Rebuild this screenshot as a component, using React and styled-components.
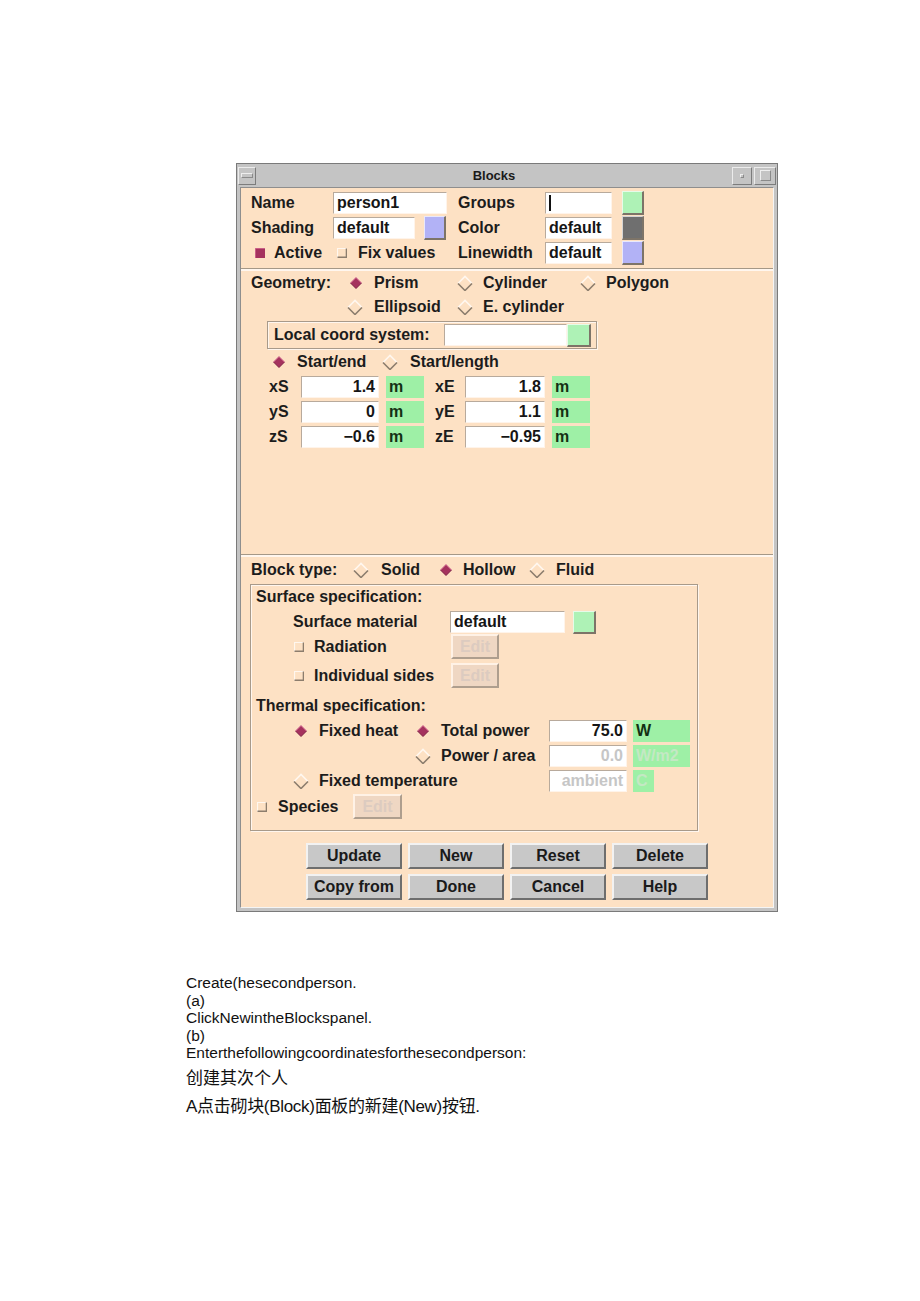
import React from "react";
import styled, { createGlobalStyle } from "styled-components";

const GlobalStyle = createGlobalStyle`
    body {
        margin: 0;
        background: #ffffff;
        font-family: "Liberation Sans", Arial, sans-serif;
    }
`;

const Page = styled.div`
    width: 920px;
    min-height: 1301px;
    padding-top: 163px;
    box-sizing: border-box;
`;

const Window = styled.div`
    margin-left: 236px;
    width: 542px;
    height: 749px;
    box-sizing: border-box;
    border: 1px solid #7a7a7a;
    background: #c4c4c4;
    display: flex;
    flex-direction: column;
`;

const TitleBar = styled.div`
    height: 23px;
    display: flex;
    align-items: center;
    padding: 0 1px;
    gap: 2px;
`;

const TitleButton = styled.div`
    width: ${(p) => p.$w || 18}px;
    height: 18px;
    box-sizing: border-box;
    border: 1px solid;
    border-color: #ececec #7c7c7c #7c7c7c #ececec;
    display: flex;
    align-items: center;
    justify-content: center;

    & i {
        display: block;
        width: ${(p) => p.$mark[0]}px;
        height: ${(p) => p.$mark[1]}px;
        border: 1px solid #8a8a8a;
        border-top-color: #eee;
        border-left-color: #eee;
    }
`;

const Title = styled.div`
    flex: 1;
    text-align: center;
    font-size: 13px;
    font-weight: bold;
    color: #1a1a1a;
`;

const Body = styled.div`
    flex: 1;
    margin: 0 3px 3px 3px;
    border: 1px solid;
    border-color: #8e8e8e #f4f4f4 #f4f4f4 #8e8e8e;
    background: #fde1c4;
    display: flex;
    flex-direction: column;
`;

const Section = styled.div`
    padding: ${(p) => p.$pt || 0}px 0 ${(p) => p.$pb || 0}px 10px;
    height: ${(p) => (p.$h ? `${p.$h}px` : "auto")};
    box-sizing: border-box;
    flex: none;
`;

const Divider = styled.div`
    height: 1px;
    background: #a59887;
    border-bottom: 2px solid #fff6ee;
    flex: none;
`;

const Row = styled.div`
    display: flex;
    align-items: center;
    height: ${(p) => p.$h || 22}px;
    margin-top: ${(p) => p.$mt || 0}px;
    padding-left: ${(p) => p.$pl || 0}px;
`;

const Cell = styled.div`
    width: ${(p) => p.$w}px;
    flex: none;
    display: flex;
    align-items: center;
`;

const Label = styled.span`
    font-size: 16px;
    font-weight: bold;
    color: #1c1c1c;
    white-space: nowrap;
`;

const Field = styled.div`
    box-sizing: border-box;
    width: ${(p) => p.$w}px;
    height: 22px;
    flex: none;
    background: #ffffff;
    border-top: 1px solid #b8aa9c;
    border-left: 1px solid #b8aa9c;
    border-bottom: 1px solid #fff4ea;
    border-right: 1px solid #fff4ea;
    padding: 0 3px;
    font-size: 16px;
    font-weight: bold;
    line-height: 20px;
    color: ${(p) => (p.$dim ? "#c6c6c6" : "#151515")};
    text-align: ${(p) => (p.$right ? "right" : "left")};
    white-space: nowrap;
    overflow: hidden;
`;

const Caret = styled.span`
    display: inline-block;
    width: 2px;
    height: 16px;
    margin-top: 2px;
    background: #111;
    vertical-align: top;
`;

const Swatch = styled.div`
    box-sizing: border-box;
    width: ${(p) => p.$w || 22}px;
    height: ${(p) => p.$h || 24}px;
    margin-left: ${(p) => p.$ml || 0}px;
    flex: none;
    background: ${(p) => p.$c};
    border-top: 1px solid rgba(255, 255, 255, 0.7);
    border-left: 1px solid rgba(255, 255, 255, 0.7);
    border-bottom: 2px solid #7d7468;
    border-right: 2px solid #7d7468;
`;

const Unit = styled.div`
    width: ${(p) => p.$w}px;
    height: 22px;
    margin-left: ${(p) => p.$ml || 6}px;
    flex: none;
    box-sizing: border-box;
    padding-left: 3px;
    background: #9ef0a6;
    font-size: 16px;
    font-weight: bold;
    line-height: 22px;
    color: ${(p) => (p.$dim ? "#c4e8c4" : "#143014")};
`;

const Frame = styled.div`
    box-sizing: border-box;
    width: ${(p) => p.$w}px;
    height: ${(p) => p.$h}px;
    margin: ${(p) => p.$mt || 0}px 0 0 ${(p) => p.$ml || 0}px;
    border: 1px solid #a89a8a;
    box-shadow: inset 1px 1px 0 #fff6ee, 1px 1px 0 #fff6ee;
    padding-left: ${(p) => p.$pl || 0}px;
    display: ${(p) => (p.$row ? "flex" : "block")};
    align-items: center;
`;

const EditButton = styled.div`
    box-sizing: border-box;
    width: ${(p) => p.$w}px;
    height: 25px;
    flex: none;
    background: #efd7c3;
    border: 2px solid;
    border-color: #fff2e6 #ae9e8e #ae9e8e #fff2e6;
    text-align: center;
    font-size: 16px;
    font-weight: bold;
    line-height: 21px;
    color: #dccbc0;
`;

const ButtonGrid = styled.div`
    display: grid;
    grid-template-columns: repeat(4, 96px);
    grid-auto-rows: 26px;
    column-gap: 6px;
    row-gap: 5px;
    margin: 12px 0 0 65px;
`;

const Button = styled.div`
    box-sizing: border-box;
    background: #c8c8c8;
    border: 2px solid;
    border-color: #f2f2f2 #6e6e6e #6e6e6e #f2f2f2;
    text-align: center;
    font-size: 16px;
    font-weight: bold;
    line-height: 22px;
    color: #1a1a1a;
`;

const MarkBox = styled.span`
    display: inline-flex;
    flex: none;
    margin-right: ${(p) => p.$gap}px;
`;

const Notes = styled.div`
    margin: 62px 0 0 186px;
    color: #111;
`;

const NoteLine = styled.div`
    font-family: "Liberation Sans", Arial, sans-serif;
    font-size: 15.5px;
    line-height: 17.5px;
`;

const CjkLine = styled.div`
    font-family: "Liberation Sans", "Noto Sans CJK SC", sans-serif;
    font-size: 17px;
    line-height: 24px;
    margin-top: ${(p) => p.$mt}px;
    letter-spacing: ${(p) => p.$ls || 0}px;
`;

function Radio({ on, children, gap = 10 }) {
    return (
        <>
            <MarkBox $gap={gap}>
                <svg width="16" height="16" viewBox="0 0 16 16">
                    {on ? (
                        <>
                            <polygon points="8,2.5 13.5,8 8,13.5 2.5,8" fill="#a5325e" />
                            <polyline points="2.5,8 8,2.5 13.5,8" fill="none" stroke="#d56d94" strokeWidth="1" />
                            <polyline points="2.5,8 8,13.5 13.5,8" fill="none" stroke="#7c1e44" strokeWidth="1" />
                        </>
                    ) : (
                        <>
                            <polyline points="1,8.5 8,1.5 15,8.5" fill="none" stroke="#fff7ef" strokeWidth="1.6" />
                            <polyline points="1,8.5 8,15.5 15,8.5" fill="none" stroke="#8c7d6d" strokeWidth="1.6" />
                        </>
                    )}
                </svg>
            </MarkBox>
            <Label>{children}</Label>
        </>
    );
}

function Check({ on, gap, lead = 0, children }) {
    return (
        <>
            <MarkBox $gap={gap} style={lead ? { marginLeft: lead } : undefined}>
                <svg width="10" height="10" viewBox="0 0 10 10">
                    {on ? (
                        <>
                            <rect x="0" y="0" width="10" height="10" fill="#a5325e" />
                            <path d="M0 10V0h10" fill="none" stroke="#d56d94" strokeWidth="1.5" />
                        </>
                    ) : (
                        <>
                            <path d="M0.5 9.5V0.5h9" fill="none" stroke="#fff7ef" strokeWidth="1.2" />
                            <path d="M0.5 9.2h9V0.5" fill="none" stroke="#8c7d6d" strokeWidth="1.6" />
                        </>
                    )}
                </svg>
            </MarkBox>
            <Label>{children}</Label>
        </>
    );
}

const coords = [
    ["xS", "1.4", "xE", "1.8"],
    ["yS", "0", "yE", "1.1"],
    ["zS", "\u22120.6", "zE", "\u22120.95"],
];

const buttons = ["Update", "New", "Reset", "Delete", "Copy from", "Done", "Cancel", "Help"];

export default function App() {
    return (
        <Page>
            <GlobalStyle />
            <Window>
                <TitleBar>
                    <TitleButton $mark={[10, 3]}>
                        <i />
                    </TitleButton>
                    <Title>Blocks</Title>
                    <TitleButton $w={20} $mark={[2, 2]}>
                        <i />
                    </TitleButton>
                    <TitleButton $w={22} $mark={[9, 9]}>
                        <i />
                    </TitleButton>
                </TitleBar>
                <Body>
                    <Section $pt={4} $pb={4}>
                        <Row>
                            <Cell $w={82}><Label>Name</Label></Cell>
                            <Cell $w={125}><Field $w={114}>person1</Field></Cell>
                            <Cell $w={87}><Label>Groups</Label></Cell>
                            <Field $w={67}><Caret /></Field>
                            <Swatch $c="#aef2b6" $ml={10} />
                        </Row>
                        <Row $mt={3}>
                            <Cell $w={82}><Label>Shading</Label></Cell>
                            <Cell $w={125}>
                                <Field $w={82}>default</Field>
                                <Swatch $c="#b2b2f6" $ml={9} />
                            </Cell>
                            <Cell $w={87}><Label>Color</Label></Cell>
                            <Field $w={67}>default</Field>
                            <Swatch $c="#6f6f6f" $ml={10} />
                        </Row>
                        <Row $mt={3}>
                            <Cell $w={82}><Check on lead={4} gap={9}>Active</Check></Cell>
                            <Cell $w={125}><Check lead={4} gap={11}>Fix values</Check></Cell>
                            <Cell $w={87}><Label>Linewidth</Label></Cell>
                            <Field $w={67}>default</Field>
                            <Swatch $c="#b2b2f6" $ml={10} />
                        </Row>
                    </Section>
                    <Divider />
                    <Section $h={283}>
                        <Row $h={20} $mt={2}>
                            <Cell $w={97}><Label>Geometry:</Label></Cell>
                            <Cell $w={109}><Radio on>Prism</Radio></Cell>
                            <Cell $w={123}><Radio>Cylinder</Radio></Cell>
                            <Radio>Polygon</Radio>
                        </Row>
                        <Row $h={20} $mt={4} $pl={96}>
                            <Cell $w={110}><Radio gap={11}>Ellipsoid</Radio></Cell>
                            <Radio>E. cylinder</Radio>
                        </Row>
                        <Frame $row $w={330} $h={28} $mt={4} $ml={16} $pl={6}>
                            <Cell $w={170}><Label>Local coord system:</Label></Cell>
                            <Field $w={123} />
                            <Swatch $c="#aef2b6" $w={24} $h={23} />
                        </Frame>
                        <Row $h={20} $mt={3} $pl={20}>
                            <Cell $w={111}><Radio on>Start/end</Radio></Cell>
                            <Radio gap={12}>Start/length</Radio>
                        </Row>
                        {coords.map(([a, av, b, bv], i) => (
                            <Row key={a} $mt={i === 0 ? 4 : 3} $pl={18}>
                                <Cell $w={32}><Label>{a}</Label></Cell>
                                <Field $w={78} $right>{av}</Field>
                                <Unit $w={38} $ml={7}>m</Unit>
                                <Cell $w={30} style={{ marginLeft: 11 }}><Label>{b}</Label></Cell>
                                <Field $w={80} $right>{bv}</Field>
                                <Unit $w={38} $ml={7}>m</Unit>
                            </Row>
                        ))}
                    </Section>
                    <Divider />
                    <Section $pt={3}>
                        <Row $h={20}>
                            <Cell $w={102}><Label>Block type:</Label></Cell>
                            <Cell $w={85}><Radio gap={12}>Solid</Radio></Cell>
                            <Cell $w={91}><Radio on gap={9}>Hollow</Radio></Cell>
                            <Radio gap={11}>Fluid</Radio>
                        </Row>
                        <Frame $w={448} $h={247} $mt={4} $ml={-1}>
                            <Row $h={20} $mt={2} $pl={5}>
                                <Label>Surface specification:</Label>
                            </Row>
                            <Row $mt={4} $pl={42}>
                                <Cell $w={157}><Label>Surface material</Label></Cell>
                                <Field $w={115}>default</Field>
                                <Swatch $c="#aef2b6" $w={23} $h={23} $ml={8} />
                            </Row>
                            <Row $h={25} $mt={1} $pl={43}>
                                <Cell $w={157}><Check gap={10}>Radiation</Check></Cell>
                                <EditButton $w={48}>Edit</EditButton>
                            </Row>
                            <Row $h={25} $mt={4} $pl={43}>
                                <Cell $w={157}><Check gap={10}>Individual sides</Check></Cell>
                                <EditButton $w={48}>Edit</EditButton>
                            </Row>
                            <Row $h={20} $mt={8} $pl={5}>
                                <Label>Thermal specification:</Label>
                            </Row>
                            <Row $mt={4} $pl={42}>
                                <Cell $w={122}><Radio on>Fixed heat</Radio></Cell>
                                <Cell $w={134}><Radio on>Total power</Radio></Cell>
                                <Field $w={78} $right>75.0</Field>
                                <Unit $w={57}>W</Unit>
                            </Row>
                            <Row $mt={3} $pl={164}>
                                <Cell $w={134}><Radio>Power / area</Radio></Cell>
                                <Field $w={78} $right $dim>0.0</Field>
                                <Unit $w={57} $dim>W/m2</Unit>
                            </Row>
                            <Row $mt={3} $pl={42}>
                                <Cell $w={256}><Radio>Fixed temperature</Radio></Cell>
                                <Field $w={78} $right $dim>ambient</Field>
                                <Unit $w={21} $dim>C</Unit>
                            </Row>
                            <Row $h={25} $mt={2} $pl={6}>
                                <Cell $w={96}><Check gap={11}>Species</Check></Cell>
                                <EditButton $w={49}>Edit</EditButton>
                            </Row>
                        </Frame>
                    </Section>
                    <ButtonGrid>
                        {buttons.map((b) => (
                            <Button key={b}>{b}</Button>
                        ))}
                    </ButtonGrid>
                </Body>
            </Window>
            <Notes>
                <NoteLine>Create(hesecondperson.</NoteLine>
                <NoteLine>(a)</NoteLine>
                <NoteLine>ClickNewintheBlockspanel.</NoteLine>
                <NoteLine>(b)</NoteLine>
                <NoteLine>Enterthefollowingcoordinatesforthesecondperson:</NoteLine>
                <CjkLine $mt={5}>创建其次个人</CjkLine>
                <CjkLine $mt={4} $ls={-0.3}>A点击砌块(Block)面板的新建(New)按钮.</CjkLine>
            </Notes>
        </Page>
    );
}
